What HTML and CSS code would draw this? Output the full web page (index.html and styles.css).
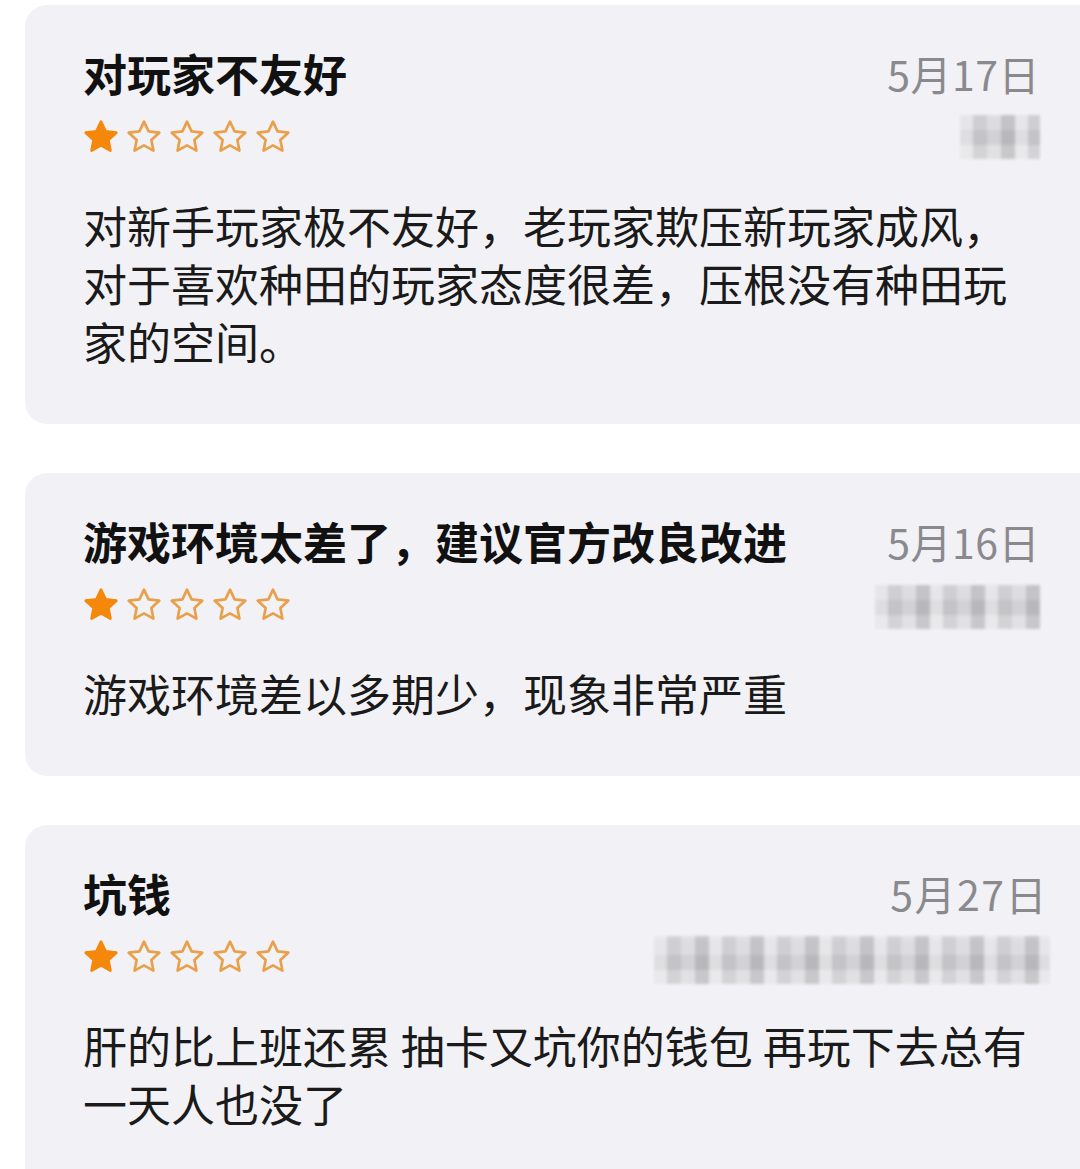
FILE: index.html
```html
<!DOCTYPE html>
<html lang="zh-CN">
<head>
<meta charset="utf-8">
<title>评论</title>
<link rel="stylesheet" href="styles.css">
</head>
<body>
<svg class="defs" width="0" height="0" aria-hidden="true">
  <defs>
    <symbol id="star" viewBox="0 0 24 24">
      <path d="M12 2.3l2.9 6.15 6.75.8-5 4.65 1.3 6.7L12 17.3l-5.95 3.3 1.3-6.7-5-4.65 6.75-.8z"/>
    </symbol>
  </defs>
</svg>
<main class="list">
  <section class="card">
    <header class="head">
      <h2 class="title">对玩家不友好</h2>
      <span class="date">5月17日</span>
      <div class="stars">
        <svg class="star full"><use href="#star"/></svg>
        <svg class="star"><use href="#star"/></svg>
        <svg class="star"><use href="#star"/></svg>
        <svg class="star"><use href="#star"/></svg>
        <svg class="star"><use href="#star"/></svg>
      </div>
      <div class="mosaic m-short"></div>
    </header>
    <p class="body">对新手玩家极不友好，老玩家欺压新玩家成风，对于喜欢种田的玩家态度很差，压根没有种田玩家的空间。</p>
  </section>

  <section class="card">
    <header class="head">
      <h2 class="title">游戏环境太差了，建议官方改良改进</h2>
      <span class="date">5月16日</span>
      <div class="stars">
        <svg class="star full"><use href="#star"/></svg>
        <svg class="star"><use href="#star"/></svg>
        <svg class="star"><use href="#star"/></svg>
        <svg class="star"><use href="#star"/></svg>
        <svg class="star"><use href="#star"/></svg>
      </div>
      <div class="mosaic m-mid"></div>
    </header>
    <p class="body">游戏环境差以多期少，现象非常严重</p>
  </section>

  <section class="card card-last">
    <header class="head">
      <h2 class="title">坑钱</h2>
      <span class="date date-wide">5月27日</span>
      <div class="stars">
        <svg class="star full"><use href="#star"/></svg>
        <svg class="star"><use href="#star"/></svg>
        <svg class="star"><use href="#star"/></svg>
        <svg class="star"><use href="#star"/></svg>
        <svg class="star"><use href="#star"/></svg>
      </div>
      <div class="mosaic m-long"></div>
    </header>
    <p class="body">肝的比上班还累 抽卡又坑你的钱包 再玩下去总有一天人也没了</p>
  </section>
</main>
</body>
</html>
```
FILE: styles.css
```css
html, body {
  margin: 0;
  padding: 0;
  background: #ffffff;
  overflow: hidden;
}
body {
  width: 1080px;
  height: 1169px;
  font-family: "Noto Sans CJK SC", "Noto Sans", sans-serif;
  color: #141414;
}
.defs {
  position: absolute;
  width: 0;
  height: 0;
}
.list {
  display: flex;
  flex-direction: column;
  gap: 49px;
  margin: 5px -35px 0 25px;
}
.card {
  background: #f2f2f6;
  border-radius: 22px;
  padding: 40px 75px 54px 58px;
}
.card-last {
  padding-bottom: 70px;
}
.head {
  display: grid;
  grid-template-columns: 1fr auto;
  grid-template-rows: 56px 40px;
  row-gap: 16px;
  align-items: center;
}
.title {
  margin: 0;
  font-size: 44px;
  line-height: 56px;
  font-weight: 700;
  color: #111111;
  white-space: nowrap;
}
.date {
  justify-self: end;
  font-size: 41px;
  line-height: 56px;
  color: #8a8a8e;
  letter-spacing: 0.5px;
}
.date-wide {
  margin-right: -8px;
  letter-spacing: 1.5px;
}
.stars {
  display: flex;
  gap: 5px;
  height: 40px;
  align-items: center;
  margin-left: -1px;
}
.star {
  width: 38px;
  height: 38px;
  fill: none;
  stroke: #e9a04c;
  stroke-width: 1.7;
  stroke-linejoin: round;
}
.star.full {
  fill: #f5870b;
  stroke: #f5870b;
}
.mosaic {
  justify-self: end;
  height: 44px;
  background-color: #cfcfd3;
  background-image:
    repeating-linear-gradient(90deg, rgba(255,255,255,0.35) 0 13px, rgba(0,0,0,0.06) 13px 27px, rgba(255,255,255,0.1) 27px 41px, rgba(0,0,0,0.12) 41px 55px),
    repeating-linear-gradient(0deg, rgba(255,255,255,0.25) 0 14px, rgba(0,0,0,0.04) 14px 29px, rgba(255,255,255,0.15) 29px 44px);
  filter: blur(1.5px);
  opacity: 0.85;
}
.m-short {
  width: 80px;
}
.m-mid {
  width: 165px;
  margin-top: 4px;
}
.m-long {
  width: 396px;
  height: 48px;
  margin-right: -10px;
  margin-top: 6px;
}
.body {
  margin: 39px 0 0;
  font-size: 44px;
  line-height: 58px;
  color: #1a1a1a;
}
```
